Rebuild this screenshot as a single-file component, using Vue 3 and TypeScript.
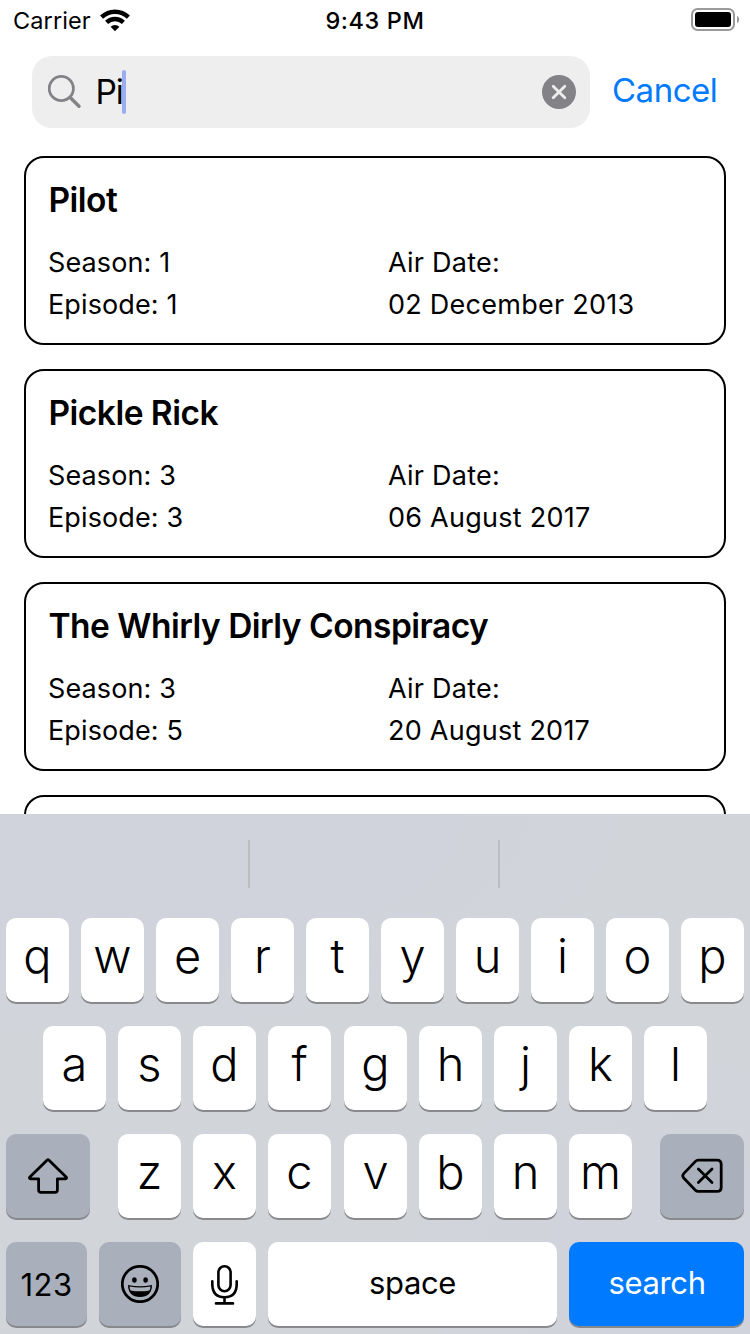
<script setup lang="ts">
interface Episode {
  title: string
  season: number
  episode: number
  airDate: string
}

const episodes: Episode[] = [
  { title: 'Pilot', season: 1, episode: 1, airDate: '02 December 2013' },
  { title: 'Pickle Rick', season: 3, episode: 3, airDate: '06 August 2017' },
  { title: 'The Whirly Dirly Conspiracy', season: 3, episode: 5, airDate: '20 August 2017' },
]

const topKeys: string[] = [...'qwertyuiop']
const homeKeys: string[] = [...'asdfghjkl']
const bottomKeys: string[] = [...'zxcvbnm']
</script>

<template>
  <div class="screen">
    <header class="status">
      <div class="status-left">
        <span class="carrier">Carrier</span>
        <svg class="wifi" width="30" height="23" viewBox="0 0 30 23">
          <path d="M15 22.2 L10.6 17.7 A6.4 6.4 0 0 1 19.4 17.7 Z" />
          <path d="M6.6 13.4 A12.2 12.2 0 0 1 23.4 13.4" class="arc" />
          <path d="M1.6 8.2 A19.3 19.3 0 0 1 28.4 8.2" class="arc" />
        </svg>
      </div>
      <span class="time">9:43 PM</span>
      <div class="status-right">
        <svg width="50" height="24" viewBox="0 0 50 24">
          <rect x="1" y="1" width="42" height="21" rx="5.5" fill="none" stroke="#9a9a9a" stroke-width="2" />
          <rect x="4" y="4" width="36" height="15" rx="3" fill="#000" />
          <path d="M46 7.8 Q48.2 9 48.2 11.5 Q48.2 14 46 15.2 Z" fill="#9a9a9a" />
        </svg>
      </div>
    </header>

    <div class="search-bar">
      <div class="field">
        <svg class="magnifier" width="34" height="34" viewBox="0 0 34 34" fill="none" stroke="#838387" stroke-linecap="round">
          <circle cx="13.3" cy="13.5" r="12.1" stroke-width="2.8" />
          <path d="M22.4 22.7 L31 31.3" stroke-width="3.4" />
        </svg>
        <span class="query">Pi</span>
        <span class="caret"></span>
        <svg class="clear" width="34" height="34" viewBox="0 0 34 34">
          <circle cx="17" cy="17" r="17" fill="#838387" />
          <path d="M11.2 11.2 L22.8 22.8 M22.8 11.2 L11.2 22.8" stroke="#eee" stroke-width="2.8" stroke-linecap="round" />
        </svg>
      </div>
      <span class="cancel">Cancel</span>
    </div>

    <main class="list">
      <article v-for="item in episodes" :key="item.title" class="card">
        <h2>{{ item.title }}</h2>
        <div class="details">
          <div class="numbering">
            <p>Season: {{ item.season }}</p>
            <p>Episode: {{ item.episode }}</p>
          </div>
          <div>
            <p>Air Date:</p>
            <p>{{ item.airDate }}</p>
          </div>
        </div>
      </article>
      <article class="card"></article>
    </main>

    <section class="keyboard">
      <div class="suggestions"><i></i><i></i></div>
      <div class="rows">
        <div class="row">
          <div v-for="k in topKeys" :key="k" class="key letter">{{ k }}</div>
        </div>
        <div class="row home">
          <div v-for="k in homeKeys" :key="k" class="key letter" :class="{ nudge: k === 'g' }">{{ k }}</div>
        </div>
        <div class="row">
          <div class="key dark shift">
            <svg width="42" height="38" viewBox="0 0 42 38" fill="none" stroke="#000" stroke-width="2.8" stroke-linejoin="round">
              <path d="M20 3.2 Q21 2.3 22 3.2 L39.1 19.9 Q40.3 21.5 38.5 21.9 H30.4 V33 Q30.4 35.3 28 35.3 H14 Q11.6 35.3 11.6 33 V21.9 H3.5 Q1.7 21.5 2.9 19.9 Z" />
            </svg>
          </div>
          <div v-for="k in bottomKeys" :key="k" class="key letter" :class="{ nudge: k === 'v' }">{{ k }}</div>
          <div class="key dark delete">
            <svg width="42" height="36" viewBox="0 0 42 36" fill="none" stroke="#000" stroke-width="2.8" stroke-linejoin="round" stroke-linecap="round">
              <path d="M17.2 2.2 H36 Q40.2 2.2 40.2 6.4 V29.2 Q40.2 33.4 36 33.4 H17.2 Q15.6 33.4 14.4 32.2 L2.7 20 Q0.9 17.8 2.7 15.6 L14.4 3.4 Q15.6 2.2 17.2 2.2 Z" />
              <path d="M17.4 11.1 L31 24.5 M31 11.1 L17.4 24.5" />
            </svg>
          </div>
        </div>
        <div class="row">
          <div class="key dark numbers">123</div>
          <div class="key dark emoji">
            <svg width="38" height="38" viewBox="0 0 38 38">
              <circle cx="19" cy="19" r="17.7" fill="none" stroke="#000" stroke-width="2.7" />
              <ellipse cx="13.4" cy="15" rx="2.3" ry="2.8" />
              <ellipse cx="24.6" cy="15" rx="2.3" ry="2.8" />
              <path d="M7 20 Q19 22.4 31 20 Q30.8 32 19 32 Q7.2 32 7 20 Z" />
              <path d="M8.6 21.6 Q19 23.6 29.4 21.6 Q29.4 24 28.4 25.4 Q19 27.2 9.6 25.4 Q8.6 24 8.6 21.6 Z" fill="#aab0bb" />
            </svg>
          </div>
          <div class="key mic">
            <svg width="28" height="42" viewBox="0 0 28 42" fill="none" stroke="#000" stroke-width="2.6" stroke-linecap="round">
              <rect x="7.4" y="3.2" width="12.2" height="25" rx="6.1" />
              <path d="M1.3 18.2 V21 Q1.3 34.2 13.5 34.2 Q25.7 34.2 25.7 21 V18.2 M13.5 34.2 V40.4 M5 40.4 H22" />
            </svg>
          </div>
          <div class="key space">space</div>
          <div class="key search">search</div>
        </div>
      </div>
    </section>
  </div>
</template>

<style>
body {
  background: #fff;
  overflow: hidden;
}
</style>

<style scoped>
.screen {
  width: 750px;
  height: 1334px;
  display: flex;
  flex-direction: column;
  overflow: hidden;
  background: #fff;
  color: #000;
  font-family: Inter, "Liberation Sans", sans-serif;
}
.status {
  height: 40px;
  flex: none;
  display: grid;
  grid-template-columns: 1fr auto 1fr;
  font-size: 23.5px;
  line-height: 42px;
}
.status-left {
  display: flex;
  padding-left: 13px;
}
.carrier {
  width: 87px;
  letter-spacing: 0.1px;
}
.wifi {
  margin-top: 9px;
}
.arc {
  fill: none;
  stroke: #000;
  stroke-width: 4.4;
}
.time {
  font-weight: 550;
  letter-spacing: 0.6px;
}
.status-right {
  display: flex;
  justify-content: flex-end;
  padding: 8px 9px 0 0;
}
.search-bar {
  flex: none;
  height: 72px;
  margin: 16px 0 28px 32px;
  display: flex;
}
.field {
  width: 558px;
  box-sizing: border-box;
  padding: 0 14px 0 16px;
  border-radius: 20px;
  background: #eee;
  display: flex;
  align-items: center;
}
.magnifier {
  margin-right: 13.5px;
}
.query {
  font-size: 33.5px;
  line-height: 74px;
  letter-spacing: -1.2px;
}
.caret {
  width: 4px;
  height: 44px;
  border-radius: 2px;
  background: #9bacf0;
  margin-left: -1px;
}
.clear {
  margin-left: auto;
}
.cancel {
  margin-left: 22px;
  color: #007aff;
  font-size: 33px;
  line-height: 69px;
  letter-spacing: -0.5px;
}
.list {
  height: 658px;
  flex: none;
  overflow: hidden;
  padding: 0 24px;
}
.card {
  box-sizing: border-box;
  height: 189px;
  margin-bottom: 24px;
  padding: 22px 22px 0;
  border: 2px solid #000;
  border-radius: 20px;
}
.card h2 {
  margin: 0 0 22px;
  padding-left: 0.5px;
  font-size: 33.5px;
  line-height: 40px;
  font-weight: 600;
  letter-spacing: -0.52px;
}
.details {
  display: grid;
  grid-template-columns: 340px 1fr;
  font-size: 27px;
  line-height: 42px;
  letter-spacing: 0.25px;
}
.details p {
  margin: 0;
}
.numbering {
  letter-spacing: 0.12px;
}
.keyboard {
  height: 520px;
  flex: none;
  background:
    radial-gradient(ellipse 280px 190px at 690px 440px, #d0d3dc 30%, transparent 100%),
    radial-gradient(ellipse 560px 220px at 60px 0, #d0d3dc 60%, transparent 100%),
    #d1d4d9;
}
.suggestions {
  height: 104px;
  box-sizing: border-box;
  padding: 26px 0 0 248px;
  display: flex;
  gap: 248px;
}
.suggestions i {
  width: 2px;
  height: 48px;
  background: #bbbdc1;
}
.rows {
  display: flex;
  flex-direction: column;
  gap: 24px;
}
.row {
  display: flex;
  gap: 12px;
  padding-left: 6px;
}
.home {
  padding-left: 43px;
}
.key {
  width: 63px;
  height: 84px;
  flex: none;
  border-radius: 10px;
  background: #fff;
  box-shadow: 0 2px 0 #88898d;
  display: flex;
  align-items: center;
  justify-content: center;
  font-size: 31px;
}
.letter {
  font-size: 47px;
  font-weight: 340;
  line-height: 76px;
  align-items: flex-start;
}
.nudge {
  margin-left: 1px;
}
.dark {
  background: #aab0bb;
}
.shift {
  width: 84px;
  margin-right: 16px;
}
.delete {
  width: 84px;
  margin-left: 16px;
}
.numbers {
  width: 81px;
  letter-spacing: 0.4px;
}
.emoji {
  width: 82px;
}
.space,
.search {
  box-sizing: border-box;
  padding-bottom: 3px;
  letter-spacing: -0.35px;
}
.space {
  width: 289px;
}
.search {
  width: 175px;
  padding-left: 1px;
  background: #007aff;
  color: #fff;
}
</style>
